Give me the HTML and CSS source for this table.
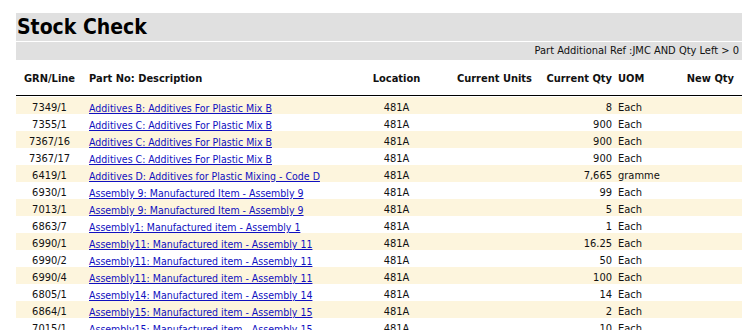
FILE: index.html
```html
<!DOCTYPE html>
<html>
<head>
<meta charset="utf-8">
<link rel="stylesheet" href="styles.css">
</head>
<body>
<div class="page">
  <div class="title-bar"><h1 class="title">Stock Check</h1></div>
  <div class="filter-bar"><span class="filter">Part Additional Ref :JMC AND Qty Left &gt; 0</span></div>
  <table class="grid">
    <colgroup>
      <col class="c-grn"><col class="c-part"><col class="c-loc"><col class="c-units"><col class="c-qty"><col class="c-uom"><col class="c-new"><col class="c-rest">
    </colgroup>
    <thead>
      <tr>
        <th class="center">GRN/Line</th>
        <th class="left">Part No: Description</th>
        <th class="center">Location</th>
        <th class="right">Current Units</th>
        <th class="right">Current Qty</th>
        <th class="left">UOM</th>
        <th class="right">New Qty</th>
        <th></th>
      </tr>
    </thead>
    <tbody>
      <tr class="odd"><td class="center">7349/1</td><td class="left"><a href="#">Additives B: Additives For Plastic Mix B</a></td><td class="center">481A</td><td></td><td class="right">8</td><td class="left">Each</td><td></td><td></td></tr>
      <tr><td class="center">7355/1</td><td class="left"><a href="#">Additives C: Additives For Plastic Mix B</a></td><td class="center">481A</td><td></td><td class="right">900</td><td class="left">Each</td><td></td><td></td></tr>
      <tr class="odd"><td class="center">7367/16</td><td class="left"><a href="#">Additives C: Additives For Plastic Mix B</a></td><td class="center">481A</td><td></td><td class="right">900</td><td class="left">Each</td><td></td><td></td></tr>
      <tr><td class="center">7367/17</td><td class="left"><a href="#">Additives C: Additives For Plastic Mix B</a></td><td class="center">481A</td><td></td><td class="right">900</td><td class="left">Each</td><td></td><td></td></tr>
      <tr class="odd"><td class="center">6419/1</td><td class="left"><a href="#">Additives D: Additives for Plastic Mixing - Code D</a></td><td class="center">481A</td><td></td><td class="right">7,665</td><td class="left">gramme</td><td></td><td></td></tr>
      <tr><td class="center">6930/1</td><td class="left"><a href="#">Assembly 9: Manufactured Item - Assembly 9</a></td><td class="center">481A</td><td></td><td class="right">99</td><td class="left">Each</td><td></td><td></td></tr>
      <tr class="odd"><td class="center">7013/1</td><td class="left"><a href="#">Assembly 9: Manufactured Item - Assembly 9</a></td><td class="center">481A</td><td></td><td class="right">5</td><td class="left">Each</td><td></td><td></td></tr>
      <tr><td class="center">6863/7</td><td class="left"><a href="#">Assembly1: Manufactured item - Assembly 1</a></td><td class="center">481A</td><td></td><td class="right">1</td><td class="left">Each</td><td></td><td></td></tr>
      <tr class="odd"><td class="center">6990/1</td><td class="left"><a href="#">Assembly11: Manufactured item - Assembly 11</a></td><td class="center">481A</td><td></td><td class="right">16.25</td><td class="left">Each</td><td></td><td></td></tr>
      <tr><td class="center">6990/2</td><td class="left"><a href="#">Assembly11: Manufactured item - Assembly 11</a></td><td class="center">481A</td><td></td><td class="right">50</td><td class="left">Each</td><td></td><td></td></tr>
      <tr class="odd"><td class="center">6990/4</td><td class="left"><a href="#">Assembly11: Manufactured item - Assembly 11</a></td><td class="center">481A</td><td></td><td class="right">100</td><td class="left">Each</td><td></td><td></td></tr>
      <tr><td class="center">6805/1</td><td class="left"><a href="#">Assembly14: Manufactured item - Assembly 14</a></td><td class="center">481A</td><td></td><td class="right">14</td><td class="left">Each</td><td></td><td></td></tr>
      <tr class="odd"><td class="center">6864/1</td><td class="left"><a href="#">Assembly15: Manufactured item - Assembly 15</a></td><td class="center">481A</td><td></td><td class="right">2</td><td class="left">Each</td><td></td><td></td></tr>
      <tr><td class="center">7015/1</td><td class="left"><a href="#">Assembly15: Manufactured item - Assembly 15</a></td><td class="center">481A</td><td></td><td class="right">10</td><td class="left">Each</td><td></td><td></td></tr>
    </tbody>
  </table>
</div>
</body>
</html>
```

FILE: styles.css
```css
html, body {
  margin: 0;
  padding: 0;
  overflow: hidden;
  background: #ffffff;
}
body {
  font-family: "DejaVu Sans Condensed", "DejaVu Sans", sans-serif;
  font-size: 11px;
  color: #111111;
}
.page {
  margin: 13px 0 0 16px;
  width: 760px;
}
.title-bar {
  background: #e0e0e0;
  height: 28px;
  border-bottom: 1px solid #ffffff;
}
.title {
  margin: 0;
  padding-left: 1px;
  font-size: 21px;
  font-weight: bold;
  line-height: 29px;
  color: #000000;
}
.filter-bar {
  background: #e0e0e0;
  height: 18px;
  line-height: 18px;
  width: 726px;
  text-align: right;
}
.filter {
  padding-right: 3px;
}
.grid {
  border-collapse: separate;
  border-spacing: 0;
  table-layout: fixed;
  width: 760px;
}
.c-grn { width: 67px; }
.c-part { width: 277px; }
.c-loc { width: 73px; }
.c-units { width: 102px; }
.c-qty { width: 80px; }
.c-uom { width: 55px; }
.c-new { width: 67px; }
.c-rest { width: 39px; }
.grid th {
  height: 34px;
  font-weight: bold;
  border-bottom: 1px solid #000000;
  padding: 1px 3px 0;
  white-space: nowrap;
}
.grid tbody tr:first-child td {
  border-top: 1px solid #ffffff;
}
.grid td {
  box-sizing: content-box;
  height: 12px;
  line-height: 12px;
  padding: 5px 3px 0;
  white-space: nowrap;
  vertical-align: top;
}
.grid tr.odd td {
  background: #fdf5dd;
}
.grid td.left:nth-child(2), .grid th.left:nth-child(2) {
  padding-left: 6px;
}
.center { text-align: center; }
.left { text-align: left; }
.right { text-align: right; }
.grid a {
  color: #1010c0;
  font-size: 10.5px;
  line-height: 12px;
  vertical-align: top;
  text-decoration: underline;
}
```
